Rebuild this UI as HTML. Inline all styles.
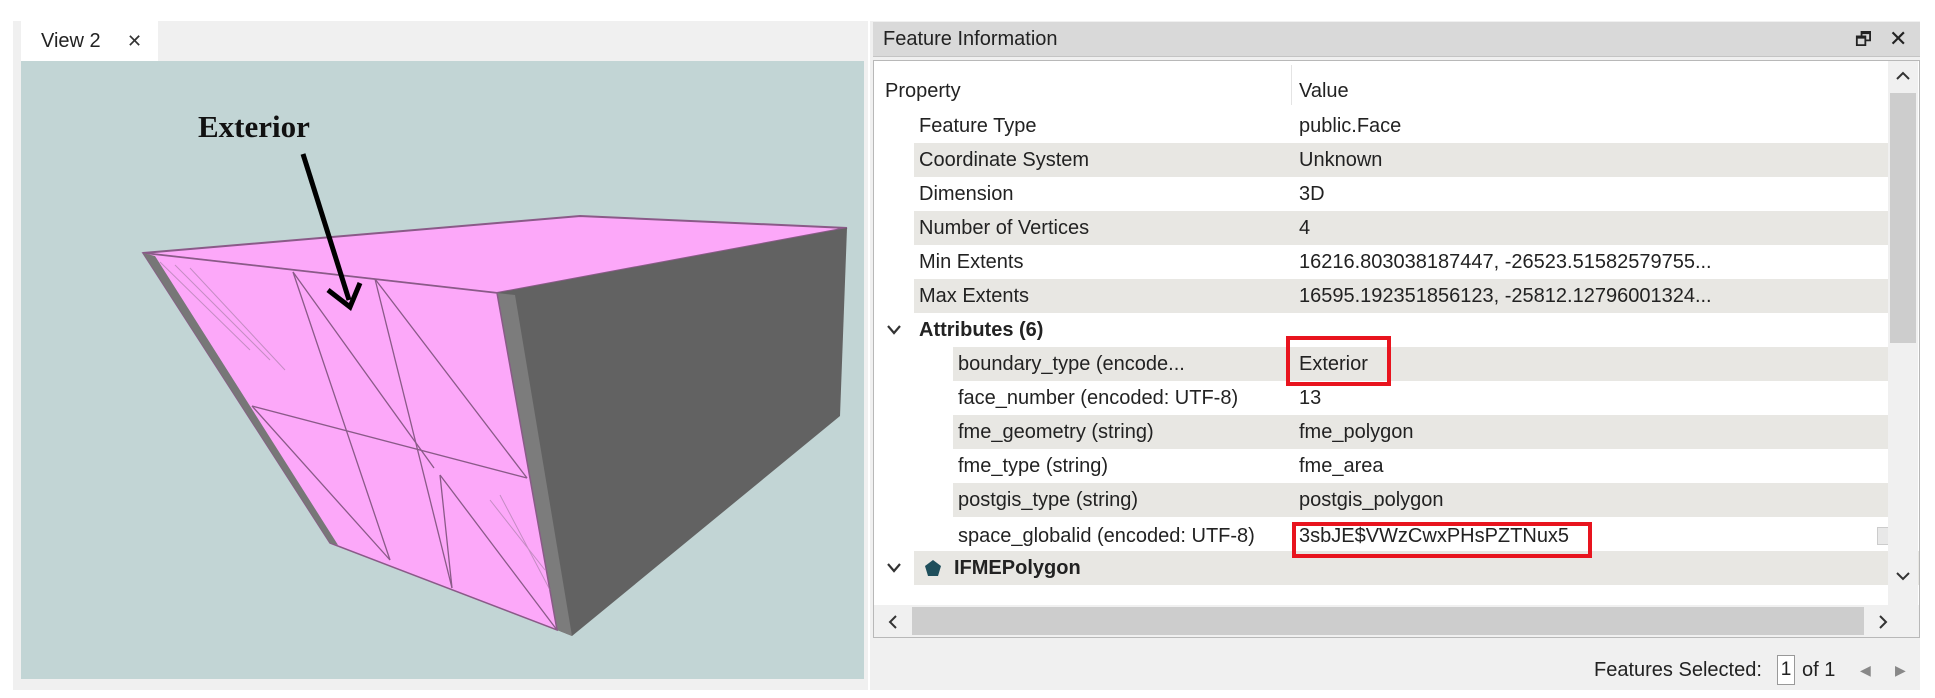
<!DOCTYPE html>
<html><head><meta charset="utf-8"><style>
body{margin:0;width:1935px;height:698px;background:#fff;position:relative;overflow:hidden;font-family:"Liberation Sans",sans-serif;color:#222}
.a{position:absolute}
.row{position:absolute;left:0;height:34px;font-size:20px;line-height:34px;white-space:nowrap}
.st{background:#e8e7e3}
</style></head><body>
<div class="a" style="left:13px;top:21px;width:855px;height:669px;background:#f0f0f0"></div>
<div class="a" style="left:21px;top:21px;width:137px;height:40px;background:#fff"></div>
<div class="a" style="left:41px;top:21px;line-height:40px;font-size:20px;color:#222">View 2</div>
<div class="a" style="left:127px;top:21px;line-height:40px;font-size:18px;color:#333">✕</div>
<div class="a" style="left:21px;top:61px;width:843px;height:618px;background:#c2d5d5"></div>
<svg class="a" style="left:0;top:0" width="870" height="698">
<polygon points="143,253 580,216 847,228 497,293" fill="#fca8f9" stroke="#8a5a88" stroke-width="2"/>
<polygon points="497,293 847,228 840,416 572,636 557,630" fill="#626262"/>
<polygon points="497,293 515,295 572,636 557,630" fill="#7c7c7c"/>
<polygon points="143,253 497,293 557,630 330,543" fill="#fca8f9" stroke="#8a5a88" stroke-width="1.5"/>
<polygon points="143,253 155,256 338,545 330,543" fill="#777"/>
<g stroke="#8a5a88" stroke-width="1.3" fill="none">
<line x1="293" y1="272" x2="390" y2="560"/>
<line x1="293" y1="272" x2="434" y2="468"/>
<line x1="375" y1="279" x2="452" y2="588"/>
<line x1="375" y1="279" x2="527" y2="478"/>
<line x1="252" y1="406" x2="527" y2="478"/>
<line x1="252" y1="406" x2="390" y2="560"/>
<line x1="440" y1="475" x2="452" y2="588"/>
<line x1="440" y1="475" x2="557" y2="630"/>
</g>
<g stroke="#a07aa0" stroke-width="1" opacity="0.6">
<line x1="160" y1="262" x2="250" y2="350"/><line x1="175" y1="265" x2="270" y2="360"/><line x1="190" y1="268" x2="285" y2="370"/>
<line x1="490" y1="500" x2="545" y2="570"/><line x1="500" y1="495" x2="550" y2="590"/>
</g>
<line x1="303" y1="154" x2="349" y2="300" stroke="#000" stroke-width="5"/>
<polyline points="328,290 350,307 360,283" fill="none" stroke="#000" stroke-width="5"/>
<text x="198" y="137" font-family="Liberation Serif" font-weight="bold" font-size="31" fill="#111">Exterior</text>
</svg>
<div class="a" style="left:870px;top:21px;width:1050px;height:669px;background:#f0f0f0"></div>
<div class="a" style="left:873px;top:22px;width:1047px;height:34px;background:#d9d9d9;border-bottom:1px solid #c4c4c4"></div>
<div class="a" style="left:883px;top:22px;line-height:34px;font-size:20px">Feature Information</div>
<div class="a" style="left:1855px;top:22px;line-height:34px;font-size:18px">🗗</div>
<div class="a" style="left:1889px;top:22px;line-height:34px;font-size:22px">✕</div>
<div class="a" style="left:873px;top:60px;width:1045px;height:576px;background:#fff;border:1px solid #b8b8b8;overflow:hidden">
 <div class="row" style="left:11px;top:8px;height:44px;line-height:44px">Property</div>
 <div class="a" style="left:417px;top:4px;width:1px;height:40px;background:#e4e4e4"></div>
 <div class="row" style="left:425px;top:8px;height:44px;line-height:44px">Value</div>
 <div class="row" style="top:48px;left:40px;width:975px;padding-left:5px">Feature Type<span class="a" style="left:385px">public.Face</span></div>
 <div class="row st" style="top:82px;left:40px;width:975px;padding-left:5px">Coordinate System<span class="a" style="left:385px">Unknown</span></div>
 <div class="row" style="top:116px;left:40px;width:975px;padding-left:5px">Dimension<span class="a" style="left:385px">3D</span></div>
 <div class="row st" style="top:150px;left:40px;width:975px;padding-left:5px">Number of Vertices<span class="a" style="left:385px">4</span></div>
 <div class="row" style="top:184px;left:40px;width:975px;padding-left:5px">Min Extents<span class="a" style="left:385px">16216.803038187447, -26523.51582579755...</span></div>
 <div class="row st" style="top:218px;left:40px;width:975px;padding-left:5px">Max Extents<span class="a" style="left:385px">16595.192351856123, -25812.12796001324...</span></div>
 <svg class="a" style="left:12px;top:262px" width="16" height="14"><polyline points="2,3 8,10 14,3" fill="none" stroke="#333" stroke-width="2.2"/></svg>
 <div class="row" style="top:252px;left:45px;font-weight:bold">Attributes (6)</div>
 <div class="row st" style="top:286px;left:79px;width:936px;padding-left:5px">boundary_type (encode...<span class="a" style="left:346px">Exterior</span></div>
 <div class="row" style="top:320px;left:79px;width:936px;padding-left:5px">face_number (encoded: UTF-8)<span class="a" style="left:346px">13</span></div>
 <div class="row st" style="top:354px;left:79px;width:936px;padding-left:5px">fme_geometry (string)<span class="a" style="left:346px">fme_polygon</span></div>
 <div class="row" style="top:388px;left:79px;width:936px;padding-left:5px">fme_type (string)<span class="a" style="left:346px">fme_area</span></div>
 <div class="row st" style="top:422px;left:79px;width:936px;padding-left:5px">postgis_type (string)<span class="a" style="left:346px">postgis_polygon</span></div>
 <div class="row" style="top:458px;left:79px;width:936px;padding-left:5px">space_globalid (encoded: UTF-8)<span class="a" style="left:346px">3sbJE$VWzCwxPHsPZTNux5</span></div>
 <div class="a" style="left:1003px;top:466px;width:14px;height:16px;background:#e8e8e8;border:1px solid #ccc"></div>
 <div class="row st" style="top:490px;left:40px;width:975px;font-weight:bold;padding-left:40px">IFMEPolygon</div>
 <svg class="a" style="left:12px;top:500px" width="16" height="14"><polyline points="2,3 8,10 14,3" fill="none" stroke="#333" stroke-width="2.2"/></svg>
 <svg class="a" style="left:50px;top:498px" width="18" height="18"><polygon points="9,1 17,7 14,17 4,17 1,7" fill="#1f4f5c"/></svg>
 <div class="a" style="left:1014px;top:0;width:30px;height:545px;background:#f0f0f0"></div>
 <div class="a" style="left:1016px;top:32px;width:26px;height:250px;background:#cdcdcd"></div>
 <svg class="a" style="left:1020px;top:8px" width="18" height="14"><polyline points="3,10 9,4 15,10" fill="none" stroke="#333" stroke-width="2"/></svg>
 <svg class="a" style="left:1020px;top:508px" width="18" height="14"><polyline points="3,4 9,10 15,4" fill="none" stroke="#333" stroke-width="2"/></svg>
 <div class="a" style="left:0;top:544px;width:1045px;height:32px;background:#f0f0f0"></div>
 <div class="a" style="left:38px;top:546px;width:952px;height:28px;background:#cdcdcd"></div>
 <svg class="a" style="left:12px;top:552px" width="14" height="18"><polyline points="10,3 4,9 10,15" fill="none" stroke="#333" stroke-width="2"/></svg>
 <svg class="a" style="left:1002px;top:552px" width="14" height="18"><polyline points="4,3 10,9 4,15" fill="none" stroke="#333" stroke-width="2"/></svg>
</div>
<div class="a" style="left:1286px;top:336px;width:105px;height:50px;border:4px solid #e8141e;box-sizing:border-box"></div>
<div class="a" style="left:1292px;top:522px;width:300px;height:36px;border:4px solid #e8141e;box-sizing:border-box"></div>
<div class="a" style="left:1594px;top:655px;line-height:30px;font-size:20px">Features Selected:</div>
<div class="a" style="left:1777px;top:655px;width:16px;height:28px;border:1px solid #999;background:#fff;line-height:28px;text-align:center;font-size:19px">1</div>
<div class="a" style="left:1802px;top:655px;line-height:30px;font-size:20px">of 1</div>
<div class="a" style="left:1860px;top:655px;line-height:30px;font-size:14px;color:#888">◀</div>
<div class="a" style="left:1895px;top:655px;line-height:30px;font-size:14px;color:#888">▶</div>
</body></html>
